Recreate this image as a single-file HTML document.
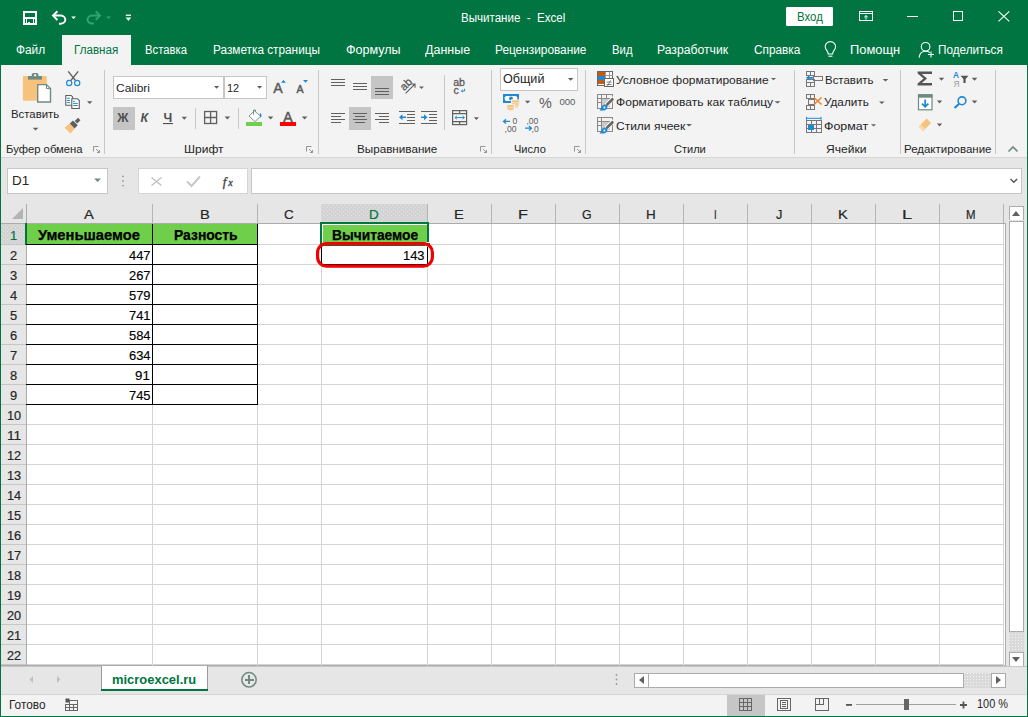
<!DOCTYPE html>
<html><head><meta charset="utf-8"><style>
html,body{margin:0;padding:0}
body{width:1028px;height:717px;overflow:hidden;position:relative;background:#007541;font-family:"Liberation Sans",sans-serif}
.a{position:absolute}
.t{position:absolute;white-space:pre;line-height:1;transform-origin:0 0}
svg{position:absolute;left:0;top:0}
</style></head><body>
<div class="a" style="left:62px;top:35px;width:69px;height:30px;background:#f3f3f3"></div>
<div class="a" style="left:1px;top:65px;width:1026px;height:92px;background:#f3f3f3"></div>
<div class="a" style="left:1px;top:157px;width:1026px;height:1px;background:#d6d6d6"></div>
<div class="a" style="left:1px;top:158px;width:1026px;height:508px;background:#e6e6e6"></div>
<div class="a" style="left:7px;top:168px;width:99px;height:24px;background:#fff;border:1px solid #c6c6c6"></div>
<div class="a" style="left:138px;top:168px;width:108px;height:24px;background:#fff;border:1px solid #d4d4d4"></div>
<div class="a" style="left:251px;top:168px;width:769px;height:24px;background:#fff;border:1px solid #c6c6c6"></div>
<div class="a" style="left:27px;top:224px;width:978px;height:442px;background:#fff"></div>
<div class="a" style="left:1px;top:666px;width:1026px;height:28px;background:#e6e6e6"></div>
<div class="a" style="left:1px;top:694px;width:1026px;height:22px;background:#f3f3f3;border-top:1px solid #d4d4d4"></div>
<svg width="1028" height="717" viewBox="0 0 1028 717" shape-rendering="crispEdges">
<!-- header borders -->
<rect x="1" y="223" width="1004" height="1" fill="#ababab"/>
<rect x="26" y="204" width="1" height="462" fill="#ababab"/>
<rect x="1005" y="223" width="1" height="443" fill="#ababab"/>
<rect x="1" y="665" width="1004" height="1" fill="#ababab"/>
<rect x="152" y="224" width="1" height="442" fill="#d4d4d4"/>
<rect x="257" y="224" width="1" height="442" fill="#d4d4d4"/>
<rect x="321" y="224" width="1" height="442" fill="#d4d4d4"/>
<rect x="427" y="224" width="1" height="442" fill="#d4d4d4"/>
<rect x="491" y="224" width="1" height="442" fill="#d4d4d4"/>
<rect x="555" y="224" width="1" height="442" fill="#d4d4d4"/>
<rect x="619" y="224" width="1" height="442" fill="#d4d4d4"/>
<rect x="683" y="224" width="1" height="442" fill="#d4d4d4"/>
<rect x="747" y="224" width="1" height="442" fill="#d4d4d4"/>
<rect x="811" y="224" width="1" height="442" fill="#d4d4d4"/>
<rect x="875" y="224" width="1" height="442" fill="#d4d4d4"/>
<rect x="939" y="224" width="1" height="442" fill="#d4d4d4"/>
<rect x="1003" y="224" width="1" height="442" fill="#d4d4d4"/>
<rect x="27" y="244" width="977" height="1" fill="#d4d4d4"/>
<rect x="27" y="264" width="977" height="1" fill="#d4d4d4"/>
<rect x="27" y="284" width="977" height="1" fill="#d4d4d4"/>
<rect x="27" y="304" width="977" height="1" fill="#d4d4d4"/>
<rect x="27" y="324" width="977" height="1" fill="#d4d4d4"/>
<rect x="27" y="344" width="977" height="1" fill="#d4d4d4"/>
<rect x="27" y="364" width="977" height="1" fill="#d4d4d4"/>
<rect x="27" y="384" width="977" height="1" fill="#d4d4d4"/>
<rect x="27" y="404" width="977" height="1" fill="#d4d4d4"/>
<rect x="27" y="424" width="977" height="1" fill="#d4d4d4"/>
<rect x="27" y="444" width="977" height="1" fill="#d4d4d4"/>
<rect x="27" y="464" width="977" height="1" fill="#d4d4d4"/>
<rect x="27" y="484" width="977" height="1" fill="#d4d4d4"/>
<rect x="27" y="504" width="977" height="1" fill="#d4d4d4"/>
<rect x="27" y="524" width="977" height="1" fill="#d4d4d4"/>
<rect x="27" y="544" width="977" height="1" fill="#d4d4d4"/>
<rect x="27" y="564" width="977" height="1" fill="#d4d4d4"/>
<rect x="27" y="584" width="977" height="1" fill="#d4d4d4"/>
<rect x="27" y="604" width="977" height="1" fill="#d4d4d4"/>
<rect x="27" y="624" width="977" height="1" fill="#d4d4d4"/>
<rect x="27" y="644" width="977" height="1" fill="#d4d4d4"/>
<rect x="27" y="664" width="977" height="1" fill="#d4d4d4"/>
<rect x="152" y="204" width="1" height="19" fill="#b4b4b4"/>
<rect x="257" y="204" width="1" height="19" fill="#b4b4b4"/>
<rect x="321" y="204" width="1" height="19" fill="#b4b4b4"/>
<rect x="427" y="204" width="1" height="19" fill="#b4b4b4"/>
<rect x="491" y="204" width="1" height="19" fill="#b4b4b4"/>
<rect x="555" y="204" width="1" height="19" fill="#b4b4b4"/>
<rect x="619" y="204" width="1" height="19" fill="#b4b4b4"/>
<rect x="683" y="204" width="1" height="19" fill="#b4b4b4"/>
<rect x="747" y="204" width="1" height="19" fill="#b4b4b4"/>
<rect x="811" y="204" width="1" height="19" fill="#b4b4b4"/>
<rect x="875" y="204" width="1" height="19" fill="#b4b4b4"/>
<rect x="939" y="204" width="1" height="19" fill="#b4b4b4"/>
<rect x="1003" y="204" width="1" height="19" fill="#b4b4b4"/>
<rect x="1" y="244" width="25" height="1" fill="#c6c6c6"/>
<rect x="1" y="264" width="25" height="1" fill="#c6c6c6"/>
<rect x="1" y="284" width="25" height="1" fill="#c6c6c6"/>
<rect x="1" y="304" width="25" height="1" fill="#c6c6c6"/>
<rect x="1" y="324" width="25" height="1" fill="#c6c6c6"/>
<rect x="1" y="344" width="25" height="1" fill="#c6c6c6"/>
<rect x="1" y="364" width="25" height="1" fill="#c6c6c6"/>
<rect x="1" y="384" width="25" height="1" fill="#c6c6c6"/>
<rect x="1" y="404" width="25" height="1" fill="#c6c6c6"/>
<rect x="1" y="424" width="25" height="1" fill="#c6c6c6"/>
<rect x="1" y="444" width="25" height="1" fill="#c6c6c6"/>
<rect x="1" y="464" width="25" height="1" fill="#c6c6c6"/>
<rect x="1" y="484" width="25" height="1" fill="#c6c6c6"/>
<rect x="1" y="504" width="25" height="1" fill="#c6c6c6"/>
<rect x="1" y="524" width="25" height="1" fill="#c6c6c6"/>
<rect x="1" y="544" width="25" height="1" fill="#c6c6c6"/>
<rect x="1" y="564" width="25" height="1" fill="#c6c6c6"/>
<rect x="1" y="584" width="25" height="1" fill="#c6c6c6"/>
<rect x="1" y="604" width="25" height="1" fill="#c6c6c6"/>
<rect x="1" y="624" width="25" height="1" fill="#c6c6c6"/>
<rect x="1" y="644" width="25" height="1" fill="#c6c6c6"/>
<rect x="1" y="664" width="25" height="1" fill="#c6c6c6"/>
<!-- selected header D and row 1 -->
<defs><pattern id="hdots" width="4" height="4" patternUnits="userSpaceOnUse"><rect width="4" height="4" fill="#d3d3d3"/><rect x="1" y="1" width="1" height="1" fill="#e2e2e2"/><rect x="3" y="3" width="1" height="1" fill="#e2e2e2"/></pattern></defs>
<rect x="321" y="204" width="106" height="19" fill="url(#hdots)"/>
<rect x="1" y="224" width="24" height="20" fill="url(#hdots)"/>
<rect x="25" y="223" width="2" height="22" fill="#007541"/>
<!-- corner triangle -->
<path d="M23 208 L23 219 L12 219 Z" fill="#b4b4b4" shape-rendering="auto"/>
<!-- green fills -->
<rect x="27" y="224" width="230" height="20" fill="#6fcf4a"/>
<rect x="321" y="224" width="106" height="20" fill="#6fcf4a"/>
<!-- table borders -->
<rect x="26" y="244" width="231" height="1" fill="#000"/>
<rect x="26" y="404" width="232" height="1" fill="#000"/>
<rect x="152" y="224" width="1" height="181" fill="#000"/>
<rect x="257" y="224" width="1" height="181" fill="#000"/>
<rect x="26" y="264" width="231" height="1" fill="#000"/>
<rect x="26" y="284" width="231" height="1" fill="#000"/>
<rect x="26" y="304" width="231" height="1" fill="#000"/>
<rect x="26" y="324" width="231" height="1" fill="#000"/>
<rect x="26" y="344" width="231" height="1" fill="#000"/>
<rect x="26" y="364" width="231" height="1" fill="#000"/>
<rect x="26" y="384" width="231" height="1" fill="#000"/>
<!-- D2 border -->
<rect x="321" y="244" width="106" height="20" fill="none" stroke="#000" stroke-width="1" transform="translate(0.5,0.5)"/>
<!-- selection D1 -->
<rect x="322" y="224" width="105" height="20" fill="none" stroke="#fff" stroke-width="1" transform="translate(0.5,0.5)"/>
<rect x="320" y="222" width="109" height="2" fill="#007541"/>
<rect x="320" y="222" width="2" height="24" fill="#007541"/>
<rect x="427" y="222" width="2" height="20" fill="#007541"/>
<rect x="320" y="244" width="105" height="2" fill="#007541"/>
<rect x="425.5" y="242.5" width="4.5" height="4" fill="#007541" stroke="#fff" stroke-width="1"/>
<!-- red highlight -->
<rect x="317.6" y="243.6" width="114.8" height="22.6" rx="9" ry="9" fill="none" stroke="#f00000" stroke-width="3.2" shape-rendering="auto"/>
<!-- vertical scrollbar -->
<rect x="1009" y="206" width="14" height="14" fill="#fff" stroke="#ababab" transform="translate(0.5,0.5)"/>
<defs><pattern id="dots" width="3" height="3" patternUnits="userSpaceOnUse"><rect width="3" height="3" fill="#dadada"/><rect x="1" y="1" width="1" height="1" fill="#f2f2f2"/></pattern></defs>
<rect x="1009" y="220" width="15" height="432" fill="url(#dots)"/>
<rect x="1009" y="221" width="14" height="410" fill="#fff" stroke="#ababab" transform="translate(0.5,0.5)"/>
<rect x="1009" y="652" width="14" height="14" fill="#fff" stroke="#ababab" transform="translate(0.5,0.5)"/>
<path d="M1012 216 L1020 216 L1016 211 Z" fill="#606060" shape-rendering="auto"/>
<path d="M1012 657 L1020 657 L1016 662 Z" fill="#606060" shape-rendering="auto"/>
<!-- horizontal scrollbar -->
<rect x="634" y="673" width="14" height="14" fill="#fff" stroke="#ababab" transform="translate(0.5,0.5)"/>
<rect x="648" y="673" width="344" height="15" fill="url(#dots)"/>
<rect x="648" y="673" width="315" height="14" fill="#fff" stroke="#ababab" transform="translate(0.5,0.5)"/>
<rect x="991" y="673" width="14" height="14" fill="#fff" stroke="#ababab" transform="translate(0.5,0.5)"/>
<path d="M644 676 L644 684 L639 680 Z" fill="#606060" shape-rendering="auto"/>
<path d="M996 676 L996 684 L1001 680 Z" fill="#606060" shape-rendering="auto"/>
<!-- sheet tab -->
<rect x="1" y="666" width="1026" height="1" fill="#c6c6c6"/>
<rect x="101" y="666" width="107" height="25" fill="#fff"/>
<rect x="101" y="666" width="1" height="25" fill="#9a9a9a"/>
<rect x="207" y="666" width="1" height="25" fill="#9a9a9a"/>
<rect x="101" y="689" width="107" height="2" fill="#007541"/>
<circle cx="249" cy="679.8" r="7.2" fill="none" stroke="#6f8a80" stroke-width="1.5" shape-rendering="auto"/>
<rect x="244.5" y="679" width="9" height="1.8" fill="#6f8a80"/>
<rect x="248.1" y="675.3" width="1.8" height="9" fill="#6f8a80"/>
<path d="M33 676 L33 683 L29.5 679.5 Z" fill="#c0c0c0" shape-rendering="auto"/>
<path d="M57 676 L57 683 L60.5 679.5 Z" fill="#c0c0c0" shape-rendering="auto"/>
<!-- window border -->
<rect x="0" y="0" width="1" height="717" fill="#007541"/>
<rect x="1027" y="0" width="1" height="717" fill="#007541"/>
<rect x="0" y="716" width="1028" height="1" fill="#007541"/>
<g shape-rendering="auto">
<!-- QAT save -->
<g fill="#fff" shape-rendering="crispEdges">
<rect x="23" y="11" width="14" height="2"/>
<rect x="23" y="23" width="14" height="2"/>
<rect x="23" y="11" width="2" height="14"/>
<rect x="35" y="11" width="2" height="14"/>
<rect x="23" y="17" width="14" height="2"/>
<rect x="26" y="19" width="1" height="5"/>
<rect x="33" y="19" width="1" height="5"/>
<rect x="28" y="22" width="2" height="2"/>
</g>
<!-- undo -->
<g fill="none" stroke="#fff" stroke-width="2">
<path d="M53.2 15.6 H60.3 A5 4.05 0 0 1 60.3 23.7 H59"/>
<path d="M57.4 11.2 L53.1 15.6 L57.4 20"/>
</g>
<path d="M71.2 16.6 H76 L73.6 19 Z" fill="#fff"/>
<!-- redo faded -->
<g fill="none" stroke="#2fa46d" stroke-width="2">
<path d="M100 15.6 H92.5 A5 4 0 0 0 92.5 23.6 H94"/>
<path d="M95.8 11.4 L100 15.6 L95.8 19.8"/>
</g>
<path d="M106 16.6 H111 L108.5 19 Z" fill="#2fa46d"/>
<!-- customize -->
<rect x="125.8" y="14.6" width="5.2" height="1.3" fill="#fff"/>
<path d="M125.6 17.6 H131.2 L128.4 21 Z" fill="#fff"/>
<!-- Login button -->
<rect x="786" y="7" width="47" height="19" rx="1.2" fill="#fff"/>
<!-- ribbon display options -->
<g fill="none" stroke="#fff" stroke-width="1">
<rect x="859.5" y="11.5" width="13" height="9"/>
<path d="M859.5 13.5 H872.5"/>
<path d="M866 19.5 V15.5 M864.2 17.3 L866 15.5 L867.8 17.3"/>
</g>
<!-- minimize / maximize / close -->
<rect x="906.5" y="16" width="11" height="1" fill="#fff" shape-rendering="crispEdges"/>
<rect x="953.5" y="11.5" width="9" height="9" fill="none" stroke="#fff" stroke-width="1"/>
<path d="M998.5 11.3 L1009.3 21.3 M1009.3 11.3 L998.5 21.3" stroke="#fff" stroke-width="1.1"/>
<!-- bulb -->
<g fill="none" stroke="#fff" stroke-width="1.1">
<path d="M828.2 54 C828 50.5 825.2 49.8 825.2 46.8 A5.2 5.2 0 0 1 835.6 46.8 C835.6 49.8 832.8 50.5 832.6 54 Z"/>
<path d="M828.4 56.2 H832.4"/>
</g>
<!-- person -->
<g fill="none" stroke="#fff" stroke-width="1.1">
<circle cx="925.6" cy="46.8" r="4.3"/>
<path d="M919.2 57.6 C919.5 53.5 922 51.3 925.6 51.3 C927.5 51.3 928.8 51.8 930 52.6"/>
<path d="M931 51.5 V57.5 M928 54.5 H934"/>
</g>

<!-- Clipboard paste -->
<rect x="22.9" y="75.9" width="23.9" height="24.8" rx="1" fill="#f7c27b"/>
<path d="M28 76 H42 V79.6 H28 Z" fill="#6f8a80"/>
<rect x="31.8" y="73" width="6.6" height="4.5" rx="1.5" fill="#6f8a80"/>
<rect x="34" y="74.3" width="2.2" height="2" fill="#f3f3f3"/>
<path d="M37.7 84.6 H46.5 L50.5 88.6 V102 H37.7 Z" fill="#fff" stroke="#6f8a80" stroke-width="1.4"/>
<path d="M46.5 84.6 V88.6 H50.5" fill="none" stroke="#6f8a80" stroke-width="1"/>
<path d="M32.7 127.8 H38.4 L35.55 130.6 Z" fill="#606060"/>
<!-- cut -->
<g fill="none" stroke="#5f5f5f" stroke-width="1.5">
<path d="M68.2 71.4 L75.6 80.6 M78.2 71.4 L70.8 80.6"/>
</g>
<circle cx="69.2" cy="83" r="2.6" fill="none" stroke="#1f8ad2" stroke-width="1.2"/>
<circle cx="77.2" cy="83" r="2.6" fill="none" stroke="#1f8ad2" stroke-width="1.2"/>
<!-- copy -->
<path d="M65.8 95.5 H71.2 L72.6 96.9 V105.2 H65.8 Z" fill="#fff" stroke="#5f5f5f" stroke-width="1.1"/>
<path d="M71.8 98.7 H77.4 L79.3 100.6 V108.5 H71.8 Z" fill="#fff" stroke="#5f5f5f" stroke-width="1.1"/>
<path d="M67.1 98.3 H69.8 M67.1 100.5 H70 M67.1 102.6 H70 M73.1 101.4 H74.8 M73.1 103.4 H77.8 M73.1 105.5 H77.8" stroke="#1f8ad2" stroke-width="1"/>
<path d="M87 101.3 H92.4 L89.7 104 Z" fill="#606060"/>
<!-- format painter -->
<path d="M70.57 133.57 L74.74 128.55 L69.65 123.46 L64.63 127.63 Z" fill="#f7c27b"/><path d="M74.60 128.41 L77.78 125.23 L72.97 120.42 L69.79 123.60 Z" fill="#5f5f5f"/><path d="M77.15 123.46 L80.47 120.13 L78.07 117.73 L74.74 121.05 Z" fill="#5f5f5f"/>
<!-- group separators -->
<g fill="#c8c8c8" shape-rendering="crispEdges">
<rect x="104" y="70" width="1" height="84"/>
<rect x="318" y="70" width="1" height="84"/>
<rect x="491" y="70" width="1" height="84"/>
<rect x="585" y="70" width="1" height="84"/>
<rect x="794" y="70" width="1" height="84"/>
<rect x="900" y="70" width="1" height="84"/>
<rect x="995" y="70" width="1" height="84"/>
<rect x="195" y="108" width="1" height="21"/>
<rect x="238" y="108" width="1" height="21"/>
<rect x="444" y="75" width="1" height="55"/>
</g>
<!-- launchers -->
<g fill="none" stroke="#8a8a8a" stroke-width="0.9">
<path d="M93.5 151.5 V146.5 H98.5 M96 149 L99.5 152.5 M99.5 150 V152.5 H97"/>
<path d="M306.5 151.5 V146.5 H311.5 M309 149 L312.5 152.5 M312.5 150 V152.5 H310"/>
<path d="M480.5 151.5 V146.5 H485.5 M483 149 L486.5 152.5 M486.5 150 V152.5 H484"/>
<path d="M574.5 151.5 V146.5 H579.5 M577 149 L580.5 152.5 M580.5 150 V152.5 H578"/>
</g>
<!-- collapse ribbon -->
<path d="M1008.5 151.5 L1013 147 L1017.5 151.5" fill="none" stroke="#6f8a80" stroke-width="1.6"/>

<!-- Font group -->
<rect x="113.5" y="76.5" width="110" height="22" fill="#fff" stroke="#c6c6c6" shape-rendering="crispEdges"/>
<rect x="224.5" y="76.5" width="42" height="22" fill="#fff" stroke="#c6c6c6" shape-rendering="crispEdges"/>
<path d="M214 86 H219.2 L216.6 88.8 Z M257 86 H262.2 L259.6 88.8 Z" fill="#606060"/>
<text x="273.2" y="93.3" font-family="Liberation Sans" font-size="14.2" fill="#5a5a5a" stroke="#5a5a5a" stroke-width="0.45">A</text>
<path d="M281 82.8 L283.5 80 L286 82.8 Z" fill="#1f8ad2"/>
<text x="296.4" y="93.3" font-family="Liberation Sans" font-size="10.6" fill="#5a5a5a" stroke="#5a5a5a" stroke-width="0.45">A</text>
<path d="M303 80 L308 80 L305.5 82.8 Z" fill="#1f8ad2"/>
<rect x="113" y="107" width="22" height="23" fill="#c5c5c5"/>
<text x="117.3" y="122.2" font-family="Liberation Sans" font-size="12.4" font-weight="bold" fill="#505050">Ж</text>
<text x="140.6" y="122.2" font-family="Liberation Sans" font-size="12.4" font-weight="bold" font-style="italic" fill="#505050">К</text>
<text x="163.6" y="122" font-family="Liberation Sans" font-size="12.4" font-weight="bold" fill="#505050">Ч</text>
<rect x="163" y="123" width="10" height="1.1" fill="#505050"/>
<path d="M181.6 116.8 H187 L184.3 119.8 Z M224.6 116.4 H230.2 L227.4 119.6 Z M267.8 116.4 H273.4 L270.6 119.6 Z M301.8 116.4 H307.4 L304.6 119.6 Z" fill="#606060"/>
<g fill="none" stroke="#606060" stroke-width="1.3">
<rect x="204.6" y="111.5" width="12" height="12"/>
<path d="M210.6 111.5 V123.5 M204.6 117.5 H216.6"/>
</g>
<path d="M249 116 L254.5 110.8 L260.5 116.3 L255 121.6 Z" fill="#fff" stroke="#6f8a80" stroke-width="0.9"/>
<path d="M253.5 114.8 V110 H255.5 V112" fill="none" stroke="#6f8a80" stroke-width="0.9"/>
<path d="M260 113 C261.8 113.6 262 116 260.6 118 L259.8 115.2 Z" fill="#1f8ad2"/>
<rect x="246" y="122" width="16" height="4" fill="#6fd04b"/>
<text x="283.2" y="121.8" font-family="Liberation Sans" font-size="14" fill="#5a5a5a" stroke="#5a5a5a" stroke-width="0.5">A</text>
<rect x="280" y="122" width="16" height="4" fill="#ff0000"/>

<!-- Alignment group -->
<g fill="#606060" shape-rendering="crispEdges">
<rect x="331" y="79" width="14" height="1.2"/><rect x="331" y="82" width="14" height="1.2"/><rect x="331" y="85" width="14" height="1.2"/>
<rect x="353" y="83" width="14" height="1.2"/><rect x="353" y="86" width="14" height="1.2"/><rect x="353" y="89" width="14" height="1.2"/>
</g>
<rect x="371" y="76" width="22" height="23" fill="#c5c5c5"/>
<g fill="#606060" shape-rendering="crispEdges">
<rect x="375" y="88" width="14" height="1.2"/><rect x="375" y="91" width="14" height="1.2"/><rect x="375" y="94" width="14" height="1.2"/>
</g>
<rect x="349" y="107" width="22" height="23" fill="#c5c5c5"/>
<g fill="#606060" shape-rendering="crispEdges">
<rect x="331" y="113" width="14" height="1.2"/><rect x="331" y="116" width="10" height="1.2"/><rect x="331" y="119" width="14" height="1.2"/><rect x="331" y="122" width="10" height="1.2"/>
<rect x="353" y="113" width="14" height="1.2"/><rect x="355" y="116" width="10" height="1.2"/><rect x="353" y="119" width="14" height="1.2"/><rect x="355" y="122" width="10" height="1.2"/>
<rect x="375" y="113" width="14" height="1.2"/><rect x="379" y="116" width="10" height="1.2"/><rect x="375" y="119" width="14" height="1.2"/><rect x="379" y="122" width="10" height="1.2"/>
<rect x="399" y="111" width="16" height="1.2"/><rect x="407" y="114" width="8" height="1.2"/><rect x="407" y="117" width="8" height="1.2"/><rect x="407" y="120" width="8" height="1.2"/><rect x="399" y="123" width="16" height="1.2"/>
<rect x="421" y="111" width="16" height="1.2"/><rect x="429" y="114" width="8" height="1.2"/><rect x="429" y="117" width="8" height="1.2"/><rect x="429" y="120" width="8" height="1.2"/><rect x="421" y="123" width="16" height="1.2"/>
</g>
<path d="M399 117.3 L402.5 114.3 V116.5 H406 V118.1 H402.5 V120.3 Z" fill="#1f8ad2"/>
<path d="M427.5 117.3 L424 114.3 V116.5 H421 V118.1 H424 V120.3 Z" fill="#1f8ad2"/>
<!-- orientation -->
<text x="0" y="0" font-family="Liberation Sans" font-size="11" fill="#5a5a5a" stroke="#5a5a5a" stroke-width="0.3" transform="translate(404.2,91.2) rotate(-45)">ab</text>
<path d="M405.6 93.4 L414.6 84.4 M411.2 84 H415 V87.8" fill="none" stroke="#5a5a5a" stroke-width="1.1"/>
<path d="M419 86.4 H424 L421.5 89 Z M473.9 117.2 H478.9 L476.4 120 Z" fill="#606060"/>
<!-- wrap -->
<text x="453.2" y="86" font-family="Liberation Sans" font-size="10.6" fill="#5a5a5a" stroke="#5a5a5a" stroke-width="0.3">ab</text>
<text x="453.6" y="93.9" font-family="Liberation Sans" font-size="10.6" fill="#5a5a5a" stroke="#5a5a5a" stroke-width="0.3">c</text>
<path d="M464.6 88.8 V91 H461.6 M462.8 89.8 L461.4 91 L462.8 92.2" fill="none" stroke="#1f8ad2" stroke-width="1"/>
<!-- merge -->
<g fill="none" stroke="#606060" stroke-width="1.2">
<rect x="452.6" y="110.6" width="14" height="14"/>
<path d="M452.6 113.6 H466.6 M452.6 121.6 H466.6 M459.6 110.6 V113.6 M459.6 121.6 V124.6"/>
</g>
<path d="M455 117.6 H464.4 M456.8 116 L455 117.6 L456.8 119.2 M462.6 116 L464.4 117.6 L462.6 119.2" fill="none" stroke="#1f8ad2" stroke-width="1"/>

<!-- Number group -->
<rect x="500.5" y="68.5" width="77" height="22" fill="#fff" stroke="#c6c6c6" shape-rendering="crispEdges"/>
<path d="M568 78 H573.4 L570.7 80.8 Z M524.9 100.8 H530.3 L527.6 103.6 Z" fill="#606060"/>
<rect x="503" y="94" width="16" height="9" fill="#1f8ad2"/>
<path d="M506 96 H516 L517.2 97.2 V99.8 L516 101 H506 L504.8 99.8 V97.2 Z" fill="#fff"/>
<circle cx="511" cy="98.5" r="1.9" fill="#1f8ad2"/>
<rect x="511" y="99.4" width="9" height="9" fill="#f3f3f3"/>
<g fill="#f7c27b">
<rect x="512" y="100.2" width="7.2" height="2.4" rx="1"/><rect x="512" y="103.3" width="7.2" height="1.1" rx="0.5"/><rect x="514.8" y="104.6" width="3.8" height="1" /><rect x="515" y="106.4" width="3.2" height="1"/>
</g>
<rect x="506" y="104.2" width="9" height="7" fill="#f3f3f3"/>
<g fill="#f7c27b">
<rect x="507" y="105.1" width="7" height="2.3" rx="1"/><rect x="507" y="108.1" width="7" height="1.1" rx="0.5"/><rect x="508.2" y="109.3" width="4.6" height="1"/>
</g>
<text x="539" y="107.8" font-family="Liberation Sans" font-size="14.4" fill="#5a5a5a">%</text>
<text x="559.4" y="104.9" font-family="Liberation Sans" font-size="9.6" fill="#5a5a5a">000</text>
<path d="M503.5 121.4 H510 M506 119.2 L503.5 121.4 L506 123.6" fill="none" stroke="#1f8ad2" stroke-width="1.3"/>
<text x="512.5" y="124.2" font-family="Liberation Sans" font-size="8.6" fill="#5a5a5a">0</text>
<text x="504.6" y="132" font-family="Liberation Sans" font-size="8.6" fill="#5a5a5a">,00</text>
<text x="526.4" y="124.2" font-family="Liberation Sans" font-size="8.6" fill="#5a5a5a">,00</text>
<path d="M525 128.2 H531.5 M529 126 L531.5 128.2 L529 130.4" fill="none" stroke="#1f8ad2" stroke-width="1.3"/>
<text x="531.6" y="132" font-family="Liberation Sans" font-size="8.6" fill="#5a5a5a">,0</text>

<!-- Styles group -->
<g shape-rendering="crispEdges">
<rect x="597.5" y="71.5" width="15" height="14" fill="#fff" stroke="#666"/>
<rect x="598" y="72" width="7" height="3.5" fill="#c55a11"/>
<rect x="598" y="76" width="7" height="3.5" fill="#1f8ad2"/>
<rect x="598" y="80" width="7" height="3.5" fill="#c55a11"/>
<path d="M605.5 71.5 V79 M609.5 71.5 V79 M605 75.5 H613" stroke="#999" fill="none"/>
<rect x="604.5" y="78.5" width="9" height="8" fill="#fff" stroke="#666"/>
</g>
<path d="M606.5 82 H611.5 M606.5 84.5 H611.5 M610.5 80.5 L607.5 86" stroke="#666" stroke-width="0.8"/>
<g shape-rendering="crispEdges" fill="none" stroke="#888">
<rect x="597.5" y="94.5" width="15" height="14"/>
<path d="M597.5 98.5 H612.5 M597.5 102.5 H612.5 M601.5 94.5 V108.5 M606.5 94.5 V108.5"/>
<rect x="597.5" y="117.5" width="15" height="14"/>
<path d="M597.5 121.5 H612.5 M597.5 125.5 H612.5 M601.5 117.5 V131.5"/>
</g>
<rect x="602" y="99" width="8" height="8" fill="#c9c9c9"/>
<rect x="602" y="122" width="8" height="8" fill="#c9c9c9"/>
<path d="M604.5 104 L612.2 96.3 L614 98.1 L614 100.5 L607.2 107.3 Z M604.5 127 L612.2 119.3 L614 121.1 L614 123.5 L607.2 130.3 Z" fill="#fff"/>
<path d="M605.5 104.2 L612.3 97.4 L613.6 98.7 L613.6 100.2 L607.4 106.1 Z M605.5 127.2 L612.3 120.4 L613.6 121.7 L613.6 123.2 L607.4 129.1 Z" fill="#666"/>
<path d="M599.6 110.6 L602.6 105.6 C604.2 103.8 606.6 104.4 607.6 106.4 C607.4 108.6 605.8 110.2 603.6 110.6 Z M599.6 133.6 L602.6 128.6 C604.2 126.8 606.6 127.4 607.6 129.4 C607.4 131.6 605.8 133.2 603.6 133.6 Z" fill="#1f8ad2"/>
<circle cx="604.4" cy="107.6" r="1" fill="#fff"/><circle cx="604.4" cy="130.6" r="1" fill="#fff"/>
<path d="M771 77.9 H776 L773.5 80.3 Z M774.5 101.2 H780.5 L777.5 103.6 Z M686 124 H692 L689 126.4 Z" fill="#606060"/>

<!-- Cells group -->
<g fill="none" stroke="#777" stroke-width="1" shape-rendering="crispEdges">
<rect x="806.5" y="71.5" width="8" height="4"/><rect x="806.5" y="79.5" width="8" height="3"/><rect x="806.5" y="82.5" width="8" height="4"/>
<path d="M810.5 71.5 V75.5 M810.5 82.5 V86.5"/>
<rect x="813.5" y="76.5" width="8.5" height="4"/>
<rect x="806.5" y="94.5" width="8" height="4"/><rect x="806.5" y="105.5" width="8" height="4"/><rect x="808.5" y="99.5" width="6" height="5"/>
<path d="M810.5 94.5 V98.5 M810.5 105.5 V109.5"/>
<rect x="806.5" y="120.5" width="15" height="12"/>
<path d="M806.5 124.5 H821.5 M806.5 128.5 H821.5 M811.5 120.5 V132.5 M816.5 120.5 V132.5"/>
</g>
<path d="M806 77.8 L809.5 75 V76.9 H813 V78.7 H809.5 V80.6 Z" fill="#1f8ad2"/>
<path d="M814 97.5 L821.5 104.5 M821.5 97.5 L814 104.5" stroke="#e8822b" stroke-width="1.5"/>
<path d="M806.5 118.3 H821 M806.5 116.8 V119.8 M821 116.8 V119.8" stroke="#1f8ad2" stroke-width="1"/>
<rect x="808" y="125" width="6" height="5" fill="#1f8ad2"/>
<path d="M882.6 79 H888.4 L885.5 81.6 Z M879 101.4 H884.6 L881.8 104 Z M871 124.2 H876 L873.5 126.6 Z" fill="#606060"/>

<!-- Editing group -->
<path d="M917.6 71.6 H932 V74 H921.8 L927 78.5 L921.8 83 H932 V85.6 H917.6 V83.6 L923.6 78.5 L917.6 73.4 Z" fill="#555"/>
<path d="M938.8 77.8 H944.2 L941.5 80.8 Z M971.7 77.8 H977.4 L974.55 80.8 Z M936.9 100.6 H942.2 L939.55 103.6 Z M971.7 100.6 H977.4 L974.55 103.6 Z M936.9 123.6 H942.2 L939.55 126.6 Z" fill="#606060"/>
<text x="953" y="77.8" font-family="Liberation Sans" font-size="8.4" font-weight="bold" fill="#1f8ad2">A</text>
<text x="953.6" y="87" font-family="Liberation Sans" font-size="8.4" fill="#9a9a9a">Я</text>
<path d="M960.6 75.8 H968.4 L965.6 79 V83 H963.4 V79 Z" fill="#555"/>
<rect x="918.5" y="94.8" width="13.5" height="15" fill="#fff" stroke="#6f8a80" stroke-width="1.2"/>
<rect x="918" y="94.3" width="14.5" height="3.4" fill="#6f8a80"/>
<path d="M925.2 99.6 V106.5 M922 103.6 L925.2 106.8 L928.4 103.6" fill="none" stroke="#1f8ad2" stroke-width="1.8"/>
<circle cx="962" cy="100.8" r="3.9" fill="none" stroke="#1f8ad2" stroke-width="1.6"/>
<path d="M959.2 103.8 L954.5 108" stroke="#1f8ad2" stroke-width="2.2"/>
<path d="M918.8 126.6 L926.6 118.6 L931 123 L923.2 131 Z" fill="#f7c27b"/>
<path d="M918.8 126.6 L921 124.4 L925.4 128.8 L923.2 131 Z" fill="#fbd9a8"/>

<!-- formula bar -->
<path d="M94.1 178.6 H101 L97.55 182 Z" fill="#6f8a80"/>
<circle cx="123" cy="176.4" r="0.9" fill="#9a9a9a"/><circle cx="123" cy="181" r="0.9" fill="#9a9a9a"/><circle cx="123" cy="185.6" r="0.9" fill="#9a9a9a"/>
<path d="M151.5 177.5 L161.5 185.5 M161.5 177.5 L151.5 185.5" stroke="#bdbdbd" stroke-width="1.2"/>
<path d="M187 181.5 L191.5 186 L200 176.5" fill="none" stroke="#c8c8c8" stroke-width="2"/>
<text x="222.8" y="186" font-family="Liberation Serif" font-size="13" font-style="italic" fill="#404040" stroke="#404040" stroke-width="0.3">f</text>
<text x="228.2" y="185.6" font-family="Liberation Serif" font-size="10" font-style="italic" fill="#404040" stroke="#404040" stroke-width="0.3">x</text>
<path d="M1010.5 179 L1013.8 182.3 L1017.1 179" fill="none" stroke="#555" stroke-width="1.4"/>

<!-- status bar -->
<rect x="727" y="695" width="38" height="21" fill="#c6c6c6" shape-rendering="crispEdges"/>
<g fill="none" stroke="#666" stroke-width="1" shape-rendering="crispEdges">
<rect x="739.5" y="698.5" width="12" height="12"/>
<path d="M743.5 698.5 V710.5 M747.5 698.5 V710.5 M739.5 702.5 H751.5 M739.5 706.5 H751.5"/>
<rect x="777.5" y="698.5" width="13" height="12"/>
<rect x="780.5" y="700.5" width="7" height="8"/>
<rect x="815.5" y="698.5" width="13" height="12"/>
<path d="M815.5 704.5 H823.5 V698.5 M819.5 698.5 V704.5"/>
</g>
<rect x="846" y="704" width="6" height="1.8" fill="#555"/>
<rect x="856" y="704" width="100" height="1" fill="#a0a0a0"/>
<rect x="782" y="702" width="4" height="1" fill="#666" shape-rendering="crispEdges"/><rect x="782" y="704" width="4" height="1" fill="#666" shape-rendering="crispEdges"/><rect x="782" y="706" width="4" height="1" fill="#666" shape-rendering="crispEdges"/>
<rect x="904" y="699" width="5" height="11" fill="#666"/>
<path d="M960 705 H967 M963.5 701.5 V708.5" stroke="#555" stroke-width="1.8"/>
<!-- macro icon in status -->
<rect x="65.5" y="698.5" width="4" height="4" fill="#555"/>
<g fill="none" stroke="#666" stroke-width="1" shape-rendering="crispEdges">
<rect x="69.5" y="700.5" width="8" height="10"/>
<path d="M65.5 704.5 H77.5 V710.5 H65.5 Z M65.5 707.5 H77.5 M69.5 704.5 V710.5 M73.5 704.5 V710.5"/>
</g>
<!-- hscroll dots -->
<circle cx="616.5" cy="675" r="0.9" fill="#9a9a9a"/><circle cx="616.5" cy="679.5" r="0.9" fill="#9a9a9a"/><circle cx="616.5" cy="684" r="0.9" fill="#9a9a9a"/>
</g>

</svg>
<span class="t" style="left:460.82px;top:12.04px;font-size:12px;font-weight:normal;color:#fff;transform:scaleX(0.9633);-webkit-text-stroke:0px #fff">Вычитание  -  Excel</span>
<span class="t" style="left:796.83px;top:11.04px;font-size:12px;font-weight:normal;color:#007541;transform:scaleX(0.9511);-webkit-text-stroke:0px #007541">Вход</span>
<span class="t" style="left:15.71px;top:43.54px;font-size:12px;font-weight:normal;color:#fff;transform:scaleX(0.9882);-webkit-text-stroke:0px #fff">Файл</span>
<span class="t" style="left:144.74px;top:43.54px;font-size:12px;font-weight:normal;color:#fff;transform:scaleX(0.9396);-webkit-text-stroke:0px #fff">Вставка</span>
<span class="t" style="left:212.81px;top:43.54px;font-size:12px;font-weight:normal;color:#fff;transform:scaleX(0.9824);-webkit-text-stroke:0px #fff">Разметка страницы</span>
<span class="t" style="left:345.57px;top:43.54px;font-size:12px;font-weight:normal;color:#fff;transform:scaleX(1.0462);-webkit-text-stroke:0px #fff">Формулы</span>
<span class="t" style="left:424.88px;top:43.54px;font-size:12px;font-weight:normal;color:#fff;transform:scaleX(1.0407);-webkit-text-stroke:0px #fff">Данные</span>
<span class="t" style="left:494.61px;top:43.54px;font-size:12px;font-weight:normal;color:#fff;transform:scaleX(0.9870);-webkit-text-stroke:0px #fff">Рецензирование</span>
<span class="t" style="left:611.63px;top:43.54px;font-size:12px;font-weight:normal;color:#fff;transform:scaleX(0.9448);-webkit-text-stroke:0px #fff">Вид</span>
<span class="t" style="left:657.39px;top:43.54px;font-size:12px;font-weight:normal;color:#fff;transform:scaleX(1.0159);-webkit-text-stroke:0px #fff">Разработчик</span>
<span class="t" style="left:753.71px;top:43.54px;font-size:12px;font-weight:normal;color:#fff;transform:scaleX(0.9848);-webkit-text-stroke:0px #fff">Справка</span>
<span class="t" style="left:849.86px;top:43.54px;font-size:12px;font-weight:normal;color:#fff;transform:scaleX(1.0733);-webkit-text-stroke:0px #fff">Помощн</span>
<span class="t" style="left:938.01px;top:43.54px;font-size:12px;font-weight:normal;color:#fff;transform:scaleX(0.9787);-webkit-text-stroke:0px #fff">Поделиться</span>
<span class="t" style="left:73.62px;top:43.54px;font-size:12px;font-weight:normal;color:#007541;transform:scaleX(0.9684);-webkit-text-stroke:0px #007541">Главная</span>
<span class="t" style="left:10.83px;top:108.48px;font-size:11.6px;font-weight:normal;color:#262626;transform:scaleX(0.9810);-webkit-text-stroke:0px #262626">Вставить</span>
<span class="t" style="left:6.04px;top:142.78px;font-size:11.6px;font-weight:normal;color:#262626;transform:scaleX(0.9725);-webkit-text-stroke:0px #262626">Буфер обмена</span>
<span class="t" style="left:116.10px;top:82.28px;font-size:11.6px;font-weight:normal;color:#262626;transform:scaleX(1.0341);-webkit-text-stroke:0px #262626">Calibri</span>
<span class="t" style="left:227.25px;top:82.28px;font-size:11.6px;font-weight:normal;color:#262626;transform:scaleX(0.9442);-webkit-text-stroke:0px #262626">12</span>
<span class="t" style="left:183.90px;top:142.78px;font-size:11.6px;font-weight:normal;color:#262626;transform:scaleX(1.0374);-webkit-text-stroke:0px #262626">Шрифт</span>
<span class="t" style="left:356.82px;top:142.78px;font-size:11.6px;font-weight:normal;color:#262626;transform:scaleX(1.0067);-webkit-text-stroke:0px #262626">Выравнивание</span>
<span class="t" style="left:502.77px;top:72.70px;font-size:12.4px;font-weight:normal;color:#262626;transform:scaleX(1.0160);-webkit-text-stroke:0px #262626">Общий</span>
<span class="t" style="left:514.05px;top:142.78px;font-size:11.6px;font-weight:normal;color:#262626;transform:scaleX(0.9536);-webkit-text-stroke:0px #262626">Число</span>
<span class="t" style="left:615.80px;top:73.88px;font-size:11.6px;font-weight:normal;color:#262626;transform:scaleX(1.0351);-webkit-text-stroke:0px #262626">Условное форматирование</span>
<span class="t" style="left:615.80px;top:96.48px;font-size:11.6px;font-weight:normal;color:#262626;transform:scaleX(1.0414);-webkit-text-stroke:0px #262626">Форматировать как таблицу</span>
<span class="t" style="left:615.80px;top:119.78px;font-size:11.6px;font-weight:normal;color:#262626;transform:scaleX(1.0352);-webkit-text-stroke:0px #262626">Стили ячеек</span>
<span class="t" style="left:673.95px;top:142.78px;font-size:11.6px;font-weight:normal;color:#262626;transform:scaleX(0.9517);-webkit-text-stroke:0px #262626">Стили</span>
<span class="t" style="left:824.63px;top:73.88px;font-size:11.6px;font-weight:normal;color:#262626;transform:scaleX(0.9873);-webkit-text-stroke:0px #262626">Вставить</span>
<span class="t" style="left:824.41px;top:96.48px;font-size:11.6px;font-weight:normal;color:#262626;transform:scaleX(1.0111);-webkit-text-stroke:0px #262626">Удалить</span>
<span class="t" style="left:824.38px;top:119.78px;font-size:11.6px;font-weight:normal;color:#262626;transform:scaleX(1.0712);-webkit-text-stroke:0px #262626">Формат</span>
<span class="t" style="left:826.40px;top:142.78px;font-size:11.6px;font-weight:normal;color:#262626;transform:scaleX(1.0410);-webkit-text-stroke:0px #262626">Ячейки</span>
<span class="t" style="left:904.03px;top:142.78px;font-size:11.6px;font-weight:normal;color:#262626;transform:scaleX(0.9899);-webkit-text-stroke:0px #262626">Редактирование</span>
<span class="t" style="left:12.33px;top:175.42px;font-size:12.5px;font-weight:normal;color:#262626;transform:scaleX(1.0768);-webkit-text-stroke:0px #262626">D1</span>
<span class="t" style="left:84.01px;top:209.02px;font-size:12.5px;font-weight:normal;color:#262626;transform:scaleX(1.1775);-webkit-text-stroke:0.2px #262626">A</span>
<span class="t" style="left:199.51px;top:209.02px;font-size:12.5px;font-weight:normal;color:#262626;transform:scaleX(1.1775);-webkit-text-stroke:0.2px #262626">B</span>
<span class="t" style="left:284.08px;top:209.02px;font-size:12.5px;font-weight:normal;color:#262626;transform:scaleX(1.0751);-webkit-text-stroke:0.2px #262626">C</span>
<span class="t" style="left:369.08px;top:209.02px;font-size:12.5px;font-weight:normal;color:#007541;transform:scaleX(1.0751);-webkit-text-stroke:0.2px #007541">D</span>
<span class="t" style="left:454.01px;top:209.02px;font-size:12.5px;font-weight:normal;color:#262626;transform:scaleX(1.1775);-webkit-text-stroke:0.2px #262626">E</span>
<span class="t" style="left:517.93px;top:209.02px;font-size:12.5px;font-weight:normal;color:#262626;transform:scaleX(1.3046);-webkit-text-stroke:0.2px #262626">F</span>
<span class="t" style="left:582.13px;top:209.02px;font-size:12.5px;font-weight:normal;color:#262626;transform:scaleX(0.9873);-webkit-text-stroke:0.2px #262626">G</span>
<span class="t" style="left:646.08px;top:209.02px;font-size:12.5px;font-weight:normal;color:#262626;transform:scaleX(1.0751);-webkit-text-stroke:0.2px #262626">H</span>
<span class="t" style="left:713.62px;top:209.02px;font-size:12.5px;font-weight:normal;color:#262626;transform:scaleX(0.7629);-webkit-text-stroke:0.2px #262626">I</span>
<span class="t" style="left:775.77px;top:209.02px;font-size:12.5px;font-weight:normal;color:#262626;transform:scaleX(1.0146);-webkit-text-stroke:0.2px #262626">J</span>
<span class="t" style="left:838.01px;top:209.02px;font-size:12.5px;font-weight:normal;color:#262626;transform:scaleX(1.1775);-webkit-text-stroke:0.2px #262626">K</span>
<span class="t" style="left:901.84px;top:209.02px;font-size:12.5px;font-weight:normal;color:#262626;transform:scaleX(1.4584);-webkit-text-stroke:0.2px #262626">L</span>
<span class="t" style="left:966.18px;top:209.02px;font-size:12.5px;font-weight:normal;color:#262626;transform:scaleX(0.9143);-webkit-text-stroke:0.2px #262626">M</span>
<span class="t" style="left:10.46px;top:230.02px;font-size:12.5px;font-weight:normal;color:#007541;transform:scaleX(1.0295);-webkit-text-stroke:0.2px #007541">1</span>
<span class="t" style="left:10.46px;top:250.02px;font-size:12.5px;font-weight:normal;color:#262626;transform:scaleX(1.0295);-webkit-text-stroke:0.2px #262626">2</span>
<span class="t" style="left:10.46px;top:270.02px;font-size:12.5px;font-weight:normal;color:#262626;transform:scaleX(1.0295);-webkit-text-stroke:0.2px #262626">3</span>
<span class="t" style="left:10.46px;top:290.02px;font-size:12.5px;font-weight:normal;color:#262626;transform:scaleX(1.0295);-webkit-text-stroke:0.2px #262626">4</span>
<span class="t" style="left:10.46px;top:310.02px;font-size:12.5px;font-weight:normal;color:#262626;transform:scaleX(1.0295);-webkit-text-stroke:0.2px #262626">5</span>
<span class="t" style="left:10.46px;top:330.02px;font-size:12.5px;font-weight:normal;color:#262626;transform:scaleX(1.0295);-webkit-text-stroke:0.2px #262626">6</span>
<span class="t" style="left:10.46px;top:350.02px;font-size:12.5px;font-weight:normal;color:#262626;transform:scaleX(1.0295);-webkit-text-stroke:0.2px #262626">7</span>
<span class="t" style="left:10.46px;top:370.02px;font-size:12.5px;font-weight:normal;color:#262626;transform:scaleX(1.0295);-webkit-text-stroke:0.2px #262626">8</span>
<span class="t" style="left:10.46px;top:390.02px;font-size:12.5px;font-weight:normal;color:#262626;transform:scaleX(1.0295);-webkit-text-stroke:0.2px #262626">9</span>
<span class="t" style="left:6.96px;top:410.02px;font-size:12.5px;font-weight:normal;color:#262626;transform:scaleX(1.0171);-webkit-text-stroke:0.2px #262626">10</span>
<span class="t" style="left:6.91px;top:430.02px;font-size:12.5px;font-weight:normal;color:#262626;transform:scaleX(1.0962);-webkit-text-stroke:0.2px #262626">11</span>
<span class="t" style="left:6.96px;top:450.02px;font-size:12.5px;font-weight:normal;color:#262626;transform:scaleX(1.0171);-webkit-text-stroke:0.2px #262626">12</span>
<span class="t" style="left:6.96px;top:470.02px;font-size:12.5px;font-weight:normal;color:#262626;transform:scaleX(1.0171);-webkit-text-stroke:0.2px #262626">13</span>
<span class="t" style="left:6.96px;top:490.02px;font-size:12.5px;font-weight:normal;color:#262626;transform:scaleX(1.0171);-webkit-text-stroke:0.2px #262626">14</span>
<span class="t" style="left:6.96px;top:510.02px;font-size:12.5px;font-weight:normal;color:#262626;transform:scaleX(1.0171);-webkit-text-stroke:0.2px #262626">15</span>
<span class="t" style="left:6.96px;top:530.02px;font-size:12.5px;font-weight:normal;color:#262626;transform:scaleX(1.0171);-webkit-text-stroke:0.2px #262626">16</span>
<span class="t" style="left:6.96px;top:550.02px;font-size:12.5px;font-weight:normal;color:#262626;transform:scaleX(1.0171);-webkit-text-stroke:0.2px #262626">17</span>
<span class="t" style="left:6.96px;top:570.02px;font-size:12.5px;font-weight:normal;color:#262626;transform:scaleX(1.0171);-webkit-text-stroke:0.2px #262626">18</span>
<span class="t" style="left:6.96px;top:590.02px;font-size:12.5px;font-weight:normal;color:#262626;transform:scaleX(1.0171);-webkit-text-stroke:0.2px #262626">19</span>
<span class="t" style="left:6.96px;top:610.02px;font-size:12.5px;font-weight:normal;color:#262626;transform:scaleX(1.0171);-webkit-text-stroke:0.2px #262626">20</span>
<span class="t" style="left:6.96px;top:630.02px;font-size:12.5px;font-weight:normal;color:#262626;transform:scaleX(1.0171);-webkit-text-stroke:0.2px #262626">21</span>
<span class="t" style="left:6.96px;top:650.02px;font-size:12.5px;font-weight:normal;color:#262626;transform:scaleX(1.0171);-webkit-text-stroke:0.2px #262626">22</span>
<span class="t" style="left:38.26px;top:228.35px;font-size:14px;font-weight:bold;color:#000;transform:scaleX(1.0530);-webkit-text-stroke:0.25px #000">Уменьшаемое</span>
<span class="t" style="left:173.61px;top:228.35px;font-size:14px;font-weight:bold;color:#000;transform:scaleX(0.9921);-webkit-text-stroke:0.25px #000">Разность</span>
<span class="t" style="left:331.61px;top:228.35px;font-size:14px;font-weight:bold;color:#000;transform:scaleX(0.9837);-webkit-text-stroke:0.25px #000">Вычитаемое</span>
<span class="t" style="left:128.65px;top:249.72px;font-size:12.5px;font-weight:normal;color:#000;transform:scaleX(1.0337);-webkit-text-stroke:0.15px #000">447</span>
<span class="t" style="left:128.65px;top:269.72px;font-size:12.5px;font-weight:normal;color:#000;transform:scaleX(1.0337);-webkit-text-stroke:0.15px #000">267</span>
<span class="t" style="left:128.65px;top:289.72px;font-size:12.5px;font-weight:normal;color:#000;transform:scaleX(1.0337);-webkit-text-stroke:0.15px #000">579</span>
<span class="t" style="left:128.65px;top:309.72px;font-size:12.5px;font-weight:normal;color:#000;transform:scaleX(1.0337);-webkit-text-stroke:0.15px #000">741</span>
<span class="t" style="left:128.65px;top:329.72px;font-size:12.5px;font-weight:normal;color:#000;transform:scaleX(1.0337);-webkit-text-stroke:0.15px #000">584</span>
<span class="t" style="left:128.65px;top:349.72px;font-size:12.5px;font-weight:normal;color:#000;transform:scaleX(1.0337);-webkit-text-stroke:0.15px #000">634</span>
<span class="t" style="left:135.43px;top:369.72px;font-size:12.5px;font-weight:normal;color:#000;transform:scaleX(1.0641);-webkit-text-stroke:0.15px #000">91</span>
<span class="t" style="left:128.65px;top:389.72px;font-size:12.5px;font-weight:normal;color:#000;transform:scaleX(1.0337);-webkit-text-stroke:0.15px #000">745</span>
<span class="t" style="left:403.45px;top:249.72px;font-size:12.5px;font-weight:normal;color:#000;transform:scaleX(1.0337);-webkit-text-stroke:0.15px #000">143</span>
<span class="t" style="left:112.35px;top:672.70px;font-size:13px;font-weight:bold;color:#007541;transform:scaleX(0.9955);-webkit-text-stroke:0px #007541">microexcel.ru</span>
<span class="t" style="left:8.91px;top:698.84px;font-size:12px;font-weight:normal;color:#262626;transform:scaleX(0.9866);-webkit-text-stroke:0px #262626">Готово</span>
<span class="t" style="left:977.45px;top:698.34px;font-size:12px;font-weight:normal;color:#262626;transform:scaleX(0.9104);-webkit-text-stroke:0px #262626">100 %</span>
</body></html>
